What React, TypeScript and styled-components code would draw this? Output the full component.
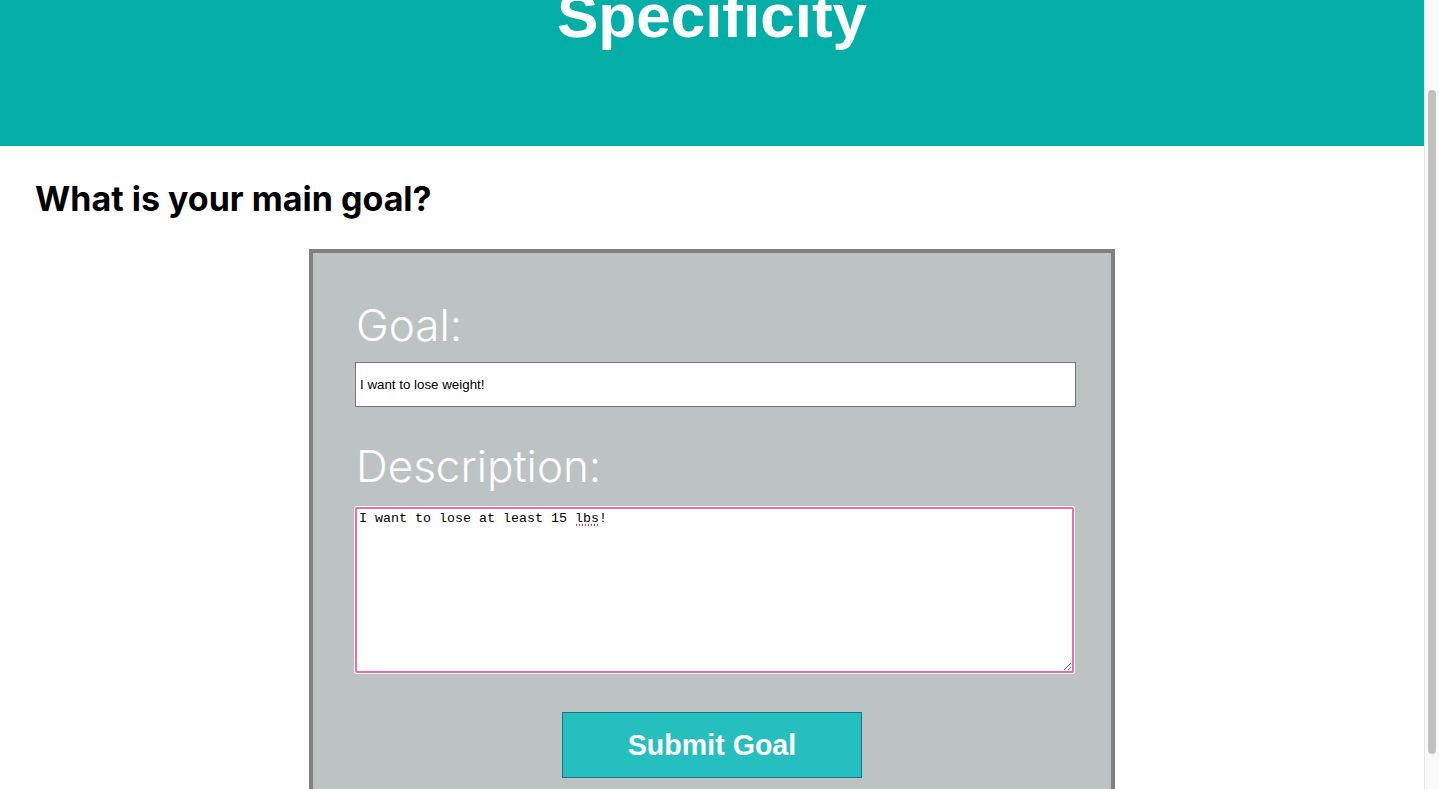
import React, { useLayoutEffect } from "react";
import styled, { createGlobalStyle } from "styled-components";

const GlobalStyle = createGlobalStyle`
  html { scrollbar-width: none; }
  html::-webkit-scrollbar { display: none; }
  html, body { margin: 0; padding: 0; background: #ffffff; overflow-x: hidden; }
  body { font-family: Inter, "Liberation Sans", Arial, sans-serif; }
`;

const Page = styled.div`
  width: calc(100vw - 15px);
  display: flex;
  flex-direction: column;
  padding-bottom: 12px;
`;

const Header = styled.header`
  background: #03aea6;
  padding: 87px 0 95px;
  display: flex;
  align-items: center;
  justify-content: center;
`;

const Title = styled.h1`
  margin: 0;
  color: #ffffff;
  font-family: "Liberation Sans", Arial, sans-serif;
  font-weight: 700;
  font-size: 62px;
  line-height: 71px;
`;

const Main = styled.main`
  display: flex;
  flex-direction: column;
  padding: 0 0 0 35px;
`;

const Question = styled.h2`
  margin: 32px 0 30px;
  font-family: Inter, "Liberation Sans", Arial, sans-serif;
  font-weight: 700;
  font-size: 34px;
  line-height: 41px;
  color: #000;
`;

const Card = styled.form`
  align-self: center;
  margin-left: -35px;
  width: 798px;
  box-sizing: content-box;
  border: 4px solid #808080;
  background: #bdc3c3;
  padding: 45px 0 40px;
  display: flex;
  flex-direction: column;
`;

const Label = styled.label<{ $gap: number }>`
  display: block;
  margin: ${(p) => p.$gap}px 0 0 43px;
  color: #ffffff;
  font-family: Inter, "Liberation Sans", Arial, sans-serif;
  font-weight: 300;
  font-size: 44px;
  line-height: 54px;
`;

const TextInput = styled.input`
  margin: 10px 0 0 42px;
  box-sizing: border-box;
  width: 721px;
  height: 45px;
  border: 1px solid #767676;
  padding: 0 4px;
  background: #ffffff;
  font-family: "Liberation Sans", Arial, sans-serif;
  font-size: 13.33px;
  color: #000;
  outline: none;
`;

const AreaWrap = styled.div`
  position: relative;
  margin: 14px 0 0 42px;
  width: 719px;
  height: 166px;
`;

const TextArea = styled.textarea`
  display: block;
  box-sizing: border-box;
  width: 719px;
  height: 166px;
  margin: 0;
  border: 2px solid #f06aa8;
  border-radius: 2px;
  box-shadow: 0 0 0 1px #ffffff;
  padding: 2px;
  background: #ffffff;
  font-family: "Liberation Mono", "Courier New", monospace;
  font-size: 13.33px;
  line-height: 15px;
  color: #000;
  outline: none;
  resize: both;
`;

const SpellMark = styled.span`
  position: absolute;
  left: 220px;
  top: 17px;
  width: 24px;
  height: 2px;
  background-image: radial-gradient(circle, #e2372f 0.9px, transparent 1.1px);
  background-size: 3px 2px;
  pointer-events: none;
`;

const SubmitButton = styled.button`
  align-self: center;
  margin-top: 39px;
  width: 300px;
  height: 66px;
  box-sizing: border-box;
  background: #26bfbf;
  border: 1px solid #1a728c;
  color: #ffffff;
  font-family: "Liberation Sans", Arial, sans-serif;
  font-weight: 700;
  font-size: 28.6px;
  cursor: pointer;
`;

const ScrollTrack = styled.div`
  position: fixed;
  top: 0;
  right: 0;
  width: 15px;
  height: 100vh;
  box-sizing: border-box;
  background: #fafafa;
  border-left: 1px solid #e4e4e4;
  padding: 90px 3px 0 3px;
  display: flex;
  flex-direction: column;
`;

const ScrollThumb = styled.div`
  width: 8px;
  height: 664px;
  border-radius: 4px;
  background: #c1c1c1;
`;

export default function App() {
  useLayoutEffect(() => {
    window.scrollTo(0, 107);
  }, []);

  return (
    <>
      <GlobalStyle />
      <Page>
        <Header>
          <Title>Specificity</Title>
        </Header>
        <Main>
          <Question>What is your main goal?</Question>
          <Card onSubmit={(e) => e.preventDefault()}>
            <Label $gap={0} htmlFor="goal">Goal:</Label>
            <TextInput id="goal" type="text" defaultValue="I want to lose weight!" />
            <Label $gap={32} htmlFor="desc">Description:</Label>
            <AreaWrap>
              <TextArea id="desc" defaultValue="I want to lose at least 15 lbs!" spellCheck={false} />
              <SpellMark />
            </AreaWrap>
            <SubmitButton type="submit">Submit Goal</SubmitButton>
          </Card>
        </Main>
      </Page>
      <ScrollTrack aria-hidden="true">
        <ScrollThumb />
      </ScrollTrack>
    </>
  );
}
